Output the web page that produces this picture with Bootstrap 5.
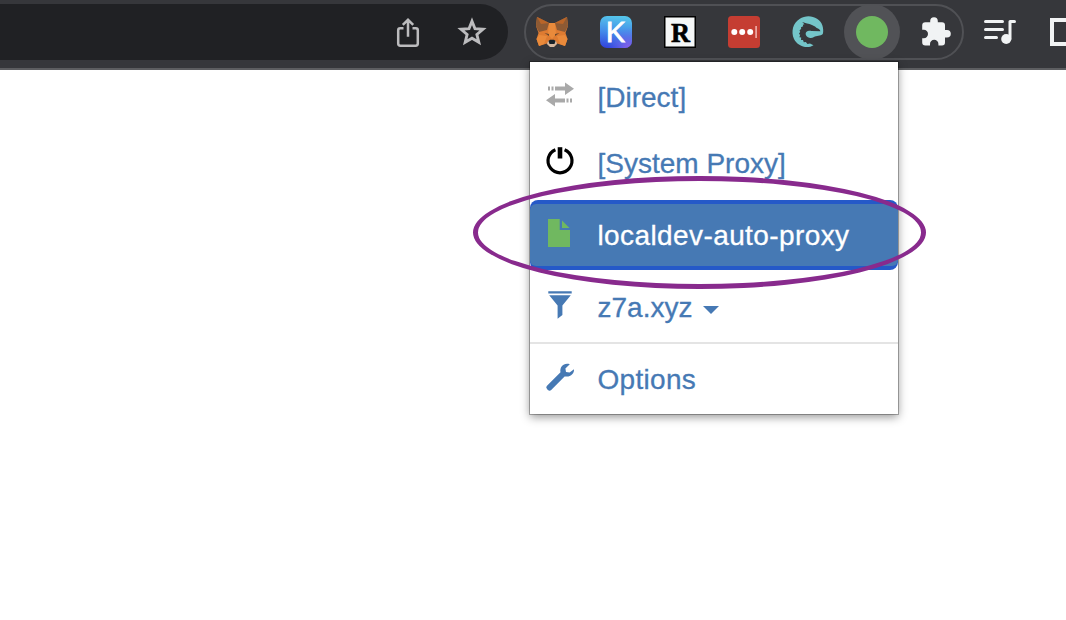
<!DOCTYPE html>
<html lang="en">
<head>
<meta charset="utf-8">
<title>Proxy menu</title>
<link rel="stylesheet" href="https://cdn.jsdelivr.net/npm/bootstrap@5.3.0/dist/css/bootstrap.min.css">
<style>
body{height:620px;overflow:hidden;background:#fff;font-family:"Liberation Sans",Arial,sans-serif}
.toolbar{height:70px;background:#36373b;border-bottom:2px solid #5d5e61;padding-top:4px}
.omnibox{width:508px;height:56px;background:#202124;border-radius:0 28px 28px 0;padding-right:20px;gap:32px;margin-right:16px}
.extensions{width:440px;height:56px;border:2px solid #505155;border-radius:28px;padding:0 10px;gap:32px;margin-right:20px}
.window-tools{height:56px;gap:32px}
.toolbar svg{width:32px;height:32px;flex:none;overflow:visible}
.proxy-menu{left:530px;top:62px;width:368px;height:352px;padding-top:2px;box-shadow:0 0 0 1px rgba(0,0,0,.28),0 3px 9px rgba(0,0,0,.42)}
.proxy-item{height:66px;padding:2px 16px 0;gap:24px;font-size:28px;line-height:40px;color:#4679b4;text-decoration:none;white-space:nowrap}
.proxy-item span{margin-left:-.5px;-webkit-text-stroke:.3px currentColor}
.proxy-item svg{width:28px;height:28px;flex:none;margin-top:-6px;overflow:visible}
.proxy-item.current{height:70px;margin:4px 0;background:#2559c8;color:#fff;border-radius:8px;position:relative;z-index:0}
.proxy-item.current::before{content:"";position:absolute;z-index:-1;inset:4px 0;background:#4679b4;border-radius:6px}
.proxy-item.current span{letter-spacing:.4px}
.proxy-item .wide{letter-spacing:.3px}
.menu-line{height:2px;background:#e4e4e4;margin:2px 0}
.menu-arrow{border:8px solid transparent;border-top-color:#4679b4;border-bottom:0;margin:3px 0 0 -13px}
.highlight-ring{left:473px;top:176px;width:453px;height:113px;border:5px solid #882a8d;border-radius:50%;pointer-events:none}
</style>
</head>
<body class="position-relative">
<header class="toolbar d-flex align-items-start">
  <div class="omnibox d-flex align-items-center justify-content-end flex-shrink-0">
    <svg viewBox="0 0 32 32" fill="none" stroke="#bcbcbe" stroke-width="2.5"><path d="M11.5 12.2H8.2Q6.2 12.2 6.2 14.2V27.5Q6.2 29.7 8.4 29.7H23.6Q25.8 29.7 25.8 27.5V14.2Q25.8 12.2 23.8 12.2H20.5M16 20.7V4.5M10.8 8.8L16 3.8L21.2 8.8"/></svg>
    <svg viewBox="0 0 32 32" fill="none" stroke="#bcbcbe" stroke-width="2.9"><path d="M16 5.2L19 12.7L27 13.3L20.9 18.5L22.8 26.3L16 22.2L9.2 26.3L11.1 18.5L5 13.3L13 12.7Z"/></svg>
  </div>
  <div class="extensions d-flex align-items-center flex-shrink-0">
    <svg viewBox="0 0 32 32"><path fill="#de7b31" d="M1 1L13 7H19L31 1L32 10L29.5 17L31.5 23L29 30L21 27.5L18 30.5H14L11 27.5L3 30L.5 23L2.5 17L0 10Z"/><path fill="#e98a3b" d="M3 19L11 20L8 28L3 30L.5 23ZM29 19L21 20L24 28L29 30L31.5 23ZM13 7H19L20 18L16 23L12 18Z"/><path fill="#8d5a34" d="M1 1L13 7L11 14L3 16L0 10ZM31 1L19 7L21 14L29 16L32 10Z"/><path fill="#b96529" d="M1 1L13 7L5 8ZM31 1L19 7L27 8Z"/><path fill="#d4b8a0" d="M12 25H20L21 28L18 31H14L11 28Z"/><path fill="#172128" d="M12.5 25L14 23.7H18L19.5 25L18.5 28H13.5Z"/><path fill="#68482f" d="M8.5 17L13 18V20ZM23.5 17L19 18V20Z"/></svg>
    <svg viewBox="0 0 32 32"><defs><linearGradient id="keyBlue" x1=".45" y1="0" x2=".35" y2="1"><stop stop-color="#55c5ea"/><stop offset=".5" stop-color="#438cea"/><stop offset="1" stop-color="#3345dd"/></linearGradient><radialGradient id="keyViolet" cx=".9" cy="1" r=".65"><stop stop-color="#8d60ea"/><stop offset="1" stop-color="#6370ea" stop-opacity="0"/></radialGradient></defs><rect width="32" height="32" rx="7" fill="url(#keyBlue)"/><rect width="32" height="32" rx="7" fill="url(#keyViolet)"/><text x="5.2" y="26.3" fill="#fff" stroke="#fff" stroke-width=".8" font-family="Open Sans,sans-serif" font-size="28" font-weight="400" textLength="19.5" lengthAdjust="spacingAndGlyphs">K</text></svg>
    <svg viewBox="0 0 32 32"><rect x=".75" y=".75" width="30.5" height="30.5" fill="#f5f7f7" stroke="#000" stroke-width="1.5"/><text x="7" y="25.5" font-family="Liberation Serif,serif" font-size="28" font-weight="700" stroke="#000" stroke-width=".6" textLength="19" lengthAdjust="spacingAndGlyphs">R</text></svg>
    <svg viewBox="0 0 32 32"><rect width="32" height="32" rx="3.5" fill="#c53d32"/><g fill="#fff"><circle cx="6.3" cy="16" r="3"/><circle cx="14.2" cy="16" r="3"/><circle cx="22.2" cy="16" r="3"/></g><path stroke="#efb1ad" stroke-width="1.6" d="M28.1 10V22"/></svg>
    <svg viewBox="0 0 32 32"><path fill="#74c5c9" d="M21.5 29.2C15 33.5 5.3 30 2 23C-1.3 15.5 1.1 6.8 7.5 3C16-2.5 27.5 1 30.4 9.5C31.2 12 31.6 15.6 30.8 18C28.5 20.3 24.3 19.5 22 21C19 23 14.5 21.7 13.8 18.8C13 15.5 16.4 14.3 19.5 15L28.4 15.3C28 13.4 26.6 12.6 24.7 12L23 10.6L20.5 9.2L17.5 8L15 7.4L10.2 5.9L12.5 8.2L10.8 8.8L11.2 10.2L9 11.2L9.2 12.7L7.5 14.4L8.2 15.8L6.9 18L8.2 18.8L7.4 21.2L9.2 21.6L9 24L11 23.9L11.8 26.2L13.8 25.9L15.5 28L18 27.6Z"/></svg>
    <svg viewBox="0 0 32 32"><circle cx="16" cy="16" r="28" fill="#515256"/><circle cx="16" cy="16" r="16" fill="#70b860"/></svg>
    <svg viewBox="0 0 32 32"><path fill="#f1f3f4" d="M10.2 6.2V5A3.8 3.8 0 0 1 17.8 5V6.2H22Q25 6.2 25 9.2V14H27A3.8 3.8 0 0 1 27 21.6H25V26.6Q25 29.6 22 29.6H18.4V28A4.2 4.2 0 0 0 10 28V29.6H5.4Q2.2 29.6 2.2 26.6V22.2H3.8A4.2 4.2 0 0 0 3.8 13.8H2.2V9.2Q2.2 6.2 5.4 6.2Z"/></svg>
  </div>
  <div class="window-tools d-flex align-items-center flex-shrink-0">
    <svg viewBox="0 0 32 32" fill="none" stroke="#f1f3f4" stroke-width="3" stroke-linecap="round"><path d="M1.5 5.5H18.5M1.5 13.5H18.5M1.5 21.5H12.5"/><path stroke-linejoin="round" d="M26 23V5.5H30.5"/><circle cx="22.2" cy="23" r="5" fill="#f1f3f4" stroke="none"/></svg>
    <svg viewBox="0 0 32 32"><path fill="none" stroke="#f1f3f4" stroke-width="4" d="M4 4H30V28H4Z"/></svg>
  </div>
</header>
<nav class="proxy-menu position-absolute bg-white d-flex flex-column" aria-label="Proxy profiles">
  <a class="proxy-item d-flex align-items-center" href="#"><svg viewBox="0 0 28 28"><path fill="#a9a9a9" d="M2 6H4V10H2ZM5.5 6H7.5V10H5.5ZM9 6H19V2L28 8.2L19 14.5V10H9ZM19 18H9V13.5L0 19.7L9 26V22H19ZM20.5 18H22.5V22H20.5ZM24 18H26V22H24Z" transform="translate(0 -.5)"/></svg><span>[Direct]</span></a>
  <a class="proxy-item d-flex align-items-center" href="#"><svg viewBox="0 0 28 28"><g fill="none" stroke="#000"><path stroke-width="3.2" d="M9.4 2.7A12 12 0 1 0 18.6 2.7"/><path stroke-width="4.6" d="M14 .2V11.5"/></g></svg><span>[System Proxy]</span></a>
  <a class="proxy-item current d-flex align-items-center" href="#"><svg viewBox="0 0 28 28"><path fill="#70b860" d="M2 0H13.7V11H24V28H2ZM16 1.5L23.5 9H16Z"/></svg><span>localdev-auto-proxy</span></a>
  <a class="proxy-item d-flex align-items-center" href="#"><svg viewBox="0 0 28 28"><path fill="#4679b4" d="M2.3.2H25.7V2.5H2.3ZM3.2 4.3H24.8L16.4 14.5V24L11.6 27.8V14.5Z"/></svg><span>z7a.xyz</span><i class="menu-arrow"></i></a>
  <div class="menu-line"></div>
  <a class="proxy-item d-flex align-items-center" href="#"><svg viewBox="0 0 28 28"><path fill="#4679b4" d="M23.8 1.2L19.4 5.5L20 9L23.6 9.6L28 6.3C28.4 10.7 24.5 14.5 18.6 13.4L5.2 26.9Q3.6 28.5 1.9 26.9L1 26Q-.6 24.4 1 22.8L14.5 9.3C13.5 3.8 18-.8 23.8 1.2Z"/></svg><span class="wide">Options</span></a>
</nav>
<div class="highlight-ring position-absolute"></div>
<script src="https://cdn.jsdelivr.net/npm/bootstrap@5.3.0/dist/js/bootstrap.bundle.min.js"></script>
</body>
</html>
